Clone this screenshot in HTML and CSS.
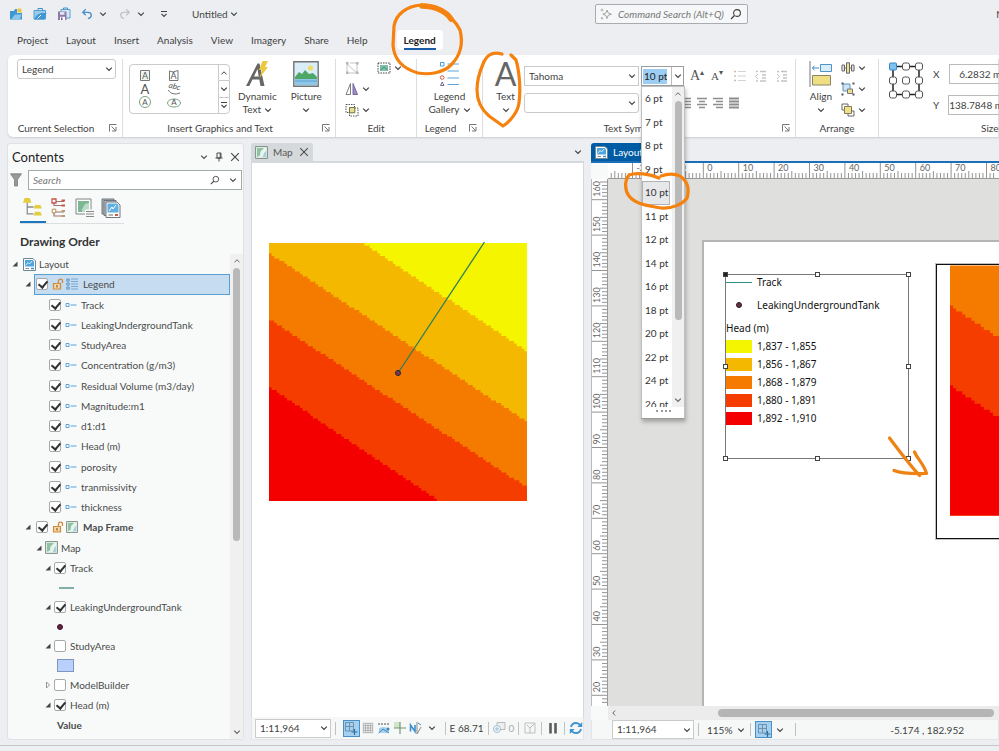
FILE: index.html
```html
<!DOCTYPE html>
<html lang="en">
<head>
  <meta charset="UTF-8" />
  <meta name="viewport" content="width=device-width, initial-scale=1.0" />
  <title>Untitled - Layout</title>
  <link rel="stylesheet" href="styles.css">
</head>
<body>
  <!-- Icon set -->
  <svg class="icon-defs" width="0" height="0" aria-hidden="true">
    <symbol id="i-chev" viewBox="0 0 8 8"><path d="M1.2 2.6 4 5.4 6.8 2.6" fill="none" stroke="currentColor" stroke-width="1.2"/></symbol>
    <symbol id="i-up" viewBox="0 0 8 8"><path d="M1.5 5.2 4 2.8 6.5 5.2" fill="none" stroke="currentColor"/></symbol>
    <symbol id="i-more" viewBox="0 0 8 8"><path d="M1 1.5H7M1.5 3.8 4 6.3 6.5 3.8" fill="none" stroke="currentColor" stroke-width="1.2"/></symbol>
    <symbol id="i-left" viewBox="0 0 8 8"><path d="M5.2 1.5 2.8 4 5.2 6.5" fill="none" stroke="currentColor"/></symbol>
    <symbol id="i-x" viewBox="0 0 10 10"><path d="M1.2 1.2 8.8 8.8M8.8 1.2 1.2 8.8" fill="none" stroke="currentColor" stroke-width="1.2"/></symbol>
    <symbol id="i-launch" viewBox="0 0 8 8"><path d="M.5 7.5V.5H7.500M2.500 2.500 6.500 6.500M7 3V7H3" fill="none" stroke="#666" stroke-width=".9"/></symbol>
    <symbol id="i-find" viewBox="0 0 12 12"><circle cx="7" cy="5" r="3.4" fill="none" stroke="currentColor" stroke-width="1.1"/><path d="M4.500 7.500 1 11" stroke="currentColor" stroke-width="1.300"/></symbol>
    <symbol id="i-spark" viewBox="0 0 12 12"><path d="M7 2 8.200 5 11.500 6.200 8.200 7.400 7 10.500 5.800 7.400 2.800 6.200 5.800 5Z" fill="none" stroke="#999" stroke-width=".9"/><path d="M2 .5V3.500M.5 2H3.500M2 9V11.500M.8 10.200H3.200" stroke="#999" stroke-width=".7"/></symbol>
    <symbol id="i-new" viewBox="0 0 14 14"><path d="M1 4H5L6 2H9V5H13V12.500H1Z" fill="#3f98d3"/><path d="M2.500 12 6 7.500H12.500L11 12Z" fill="#8cc6ea"/><path d="M8 1.200H12.800V6H8Z" fill="#f3e3a3"/><circle cx="10.400" cy="3.600" r="2" fill="#e7c54c"/></symbol>
    <symbol id="i-open" viewBox="0 0 14 14"><path d="M1 3.500H12.500V12H1Z" fill="#9bcbea" stroke="#3b8fcb" stroke-width=".8"/><path d="M5 3.500V1.500H9.500V3.500" fill="none" stroke="#3b8fcb"/><path d="M1 12.500 3.800 8 8 6H13.500L11.500 12.500Z" fill="#3f98d3"/><path d="M4.500 11.500 8 8" stroke="#fff"/></symbol>
    <symbol id="i-save" viewBox="0 0 14 14"><path d="M4 2.500H13V11H4Z" fill="#d6eaf6" stroke="#3b8fcb" stroke-width=".8"/><path d="M6.500 2.500V1H10.500V2.500" fill="none" stroke="#3b8fcb"/><path d="M1 4.500H9.500V13H1Z" fill="#8b7aa8"/><path d="M3 5H7.500V7.800H3Z" fill="#e6e1ee"/><path d="M3 9.800H8V13H3Z" fill="#fff"/><path d="M4 10.500H5.500V13H4Z" fill="#6b5a8c"/></symbol>
    <symbol id="i-undo" viewBox="0 0 14 14"><path d="M5.500 1.500 2 5 5.500 8.500M2.300 5H8.500Q12 5.200 12 8.500 12 11.500 8 12.500" fill="none" stroke="currentColor" stroke-width="1.500"/></symbol>
    <symbol id="i-redo" viewBox="0 0 14 14"><path d="M8.500 1.500 12 5 8.500 8.500M11.700 5H5.500Q2 5.200 2 8.500 2 11.500 6 12.500" fill="none" stroke="currentColor" stroke-width="1.300"/></symbol>
    <symbol id="i-pic" viewBox="0 0 26 26"><path d="M.8.800H25.200V25.200H.8Z" fill="#d9edf9" stroke="#737373" stroke-width="1.400"/><circle cx="17.500" cy="7" r="2.600" fill="#f0dc62"/><path d="M2 16 6 11 9 13 12 9 16 13 20 12 24 16V18H2Z" fill="#4fa767"/><path d="M2 18H24V24H2Z" fill="#8fc7e8"/><path d="M2 20H24" stroke="#5aa3d2"/></symbol>
    <symbol id="i-list" viewBox="0 0 20 26"><g fill="none"><path d="M1.500 1.500H5V5H1.500Z" stroke="#4a9bd6"/><circle cx="3.200" cy="16.500" r="1.800" stroke="#d0574e"/><path d="M3.200 21 5 24.500H1.500Z" stroke="#6d6d8e"/><path d="M8.500 3H20M8.500 10H20M8.500 17H20M8.500 23.500H20" stroke="#5ea6d8" stroke-width="1.200"/></g></symbol>
    <symbol id="i-nodes" viewBox="0 0 14 14"><path d="M2 3V12M2 12H12M2 3 12 12M12 3V12M5 2H12" fill="none" stroke="#c4c4c4"/><path d="M1 1H3.500V3.500H1ZM11 1H13.500V3.500H11ZM1 10.500H3.500V13H1ZM11 10.500H13.500V13H11Z" fill="#b5b5b5"/></symbol>
    <symbol id="i-selall" viewBox="0 0 14 12"><path d="M1 1H13V11H1Z" fill="#fff" stroke="#444" stroke-dasharray="1.500 1"/><path d="M3 3H11V9H3Z" fill="#7fc0a6"/><path d="M3.500 8 7 5 10.500 8" fill="none" stroke="#3f8a8a"/></symbol>
    <symbol id="i-flip" viewBox="0 0 14 14"><path d="M5.500 1.500V12.500H1Z" fill="#fff" stroke="#7d7d7d"/><path d="M8 1.500V12.500H12.500Z" fill="#a08cc9" stroke="#77669e"/></symbol>
    <symbol id="i-group" viewBox="0 0 14 14"><path d="M1 1.500H9.500V9.500H1ZM4.500 5H13V13H4.500Z" fill="none" stroke="#555" stroke-dasharray="1.500 1"/><path d="M4.500 4.500H9.800V9.800H4.500Z" fill="#e7df8b" stroke="#6c7a4a"/></symbol>
    <symbol id="i-bullets" viewBox="0 0 14 14"><path d="M1 2.500H3M1 7H3M1 11.500H3" stroke="#d7b9b9" stroke-width="1.500"/><path d="M5 2.500H13M5 7H13M5 11.500H13" stroke="#d2d2d2" stroke-width="1.200"/></symbol>
    <symbol id="i-outdent" viewBox="0 0 14 14"><path d="M2 2.500H4M6 2.500H12M8 6H12M8 9H12M2 12H4M6 12H12" stroke="#c3c3c3" stroke-width="1.300"/><path d="M4 5 1.500 7.500 4 10" fill="none" stroke="#b5c2cc"/></symbol>
    <symbol id="i-indent" viewBox="0 0 14 14"><path d="M2 2.500H4M6 2.500H12M8 6H12M8 9H12M2 12H4M6 12H12" stroke="#c3c3c3" stroke-width="1.300"/><path d="M2 5 4.500 7.500 2 10" fill="none" stroke="#b5c2cc"/></symbol>
    <symbol id="i-just" viewBox="0 0 12 12"><path d="M1 1.500H11M1 4.500H11M1 7.500H11M1 10.500H11" stroke="#8e8e8e" stroke-width="2"/></symbol>
    <symbol id="i-center" viewBox="0 0 12 12"><path d="M1 1.500H11M3 4.500H9M1 7.500H11M3 10.500H9" stroke="#8e8e8e" stroke-width="1.700"/></symbol>
    <symbol id="i-right" viewBox="0 0 12 12"><path d="M1 1.500H11M4 4.500H11M1 7.500H11M4 10.500H11" stroke="#8e8e8e" stroke-width="1.700"/></symbol>
    <symbol id="i-align" viewBox="0 0 24 26"><path d="M1 0V26" stroke="#777"/><path d="M11.500 3.500H22.500V10.500H11.500Z" fill="#d9ecfa" stroke="#4f93c8"/><path d="M10 7H3.500M5.500 4.800 3.300 7 5.500 9.200" fill="none" stroke="#3f8cc4"/><path d="M3.500 14.500H21.500V24H3.500Z" fill="#f0df82" stroke="#8a8464"/></symbol>
    <symbol id="i-dist" viewBox="0 0 14 12"><path d="M.5 6H13.500" stroke="#666"/><path d="M1 3H3.500V9H1ZM10.500 3H13V9H10.500Z" fill="#e8e8e8" stroke="#666"/><path d="M5.500.8H8.500V11.200H5.500Z" fill="#eedf8a" stroke="#666"/></symbol>
    <symbol id="i-objgrp" viewBox="0 0 14 14"><path d="M2 2H9V9H2Z" fill="#cfe5f6" stroke="#5e94bd"/><path d="M6.500 7H11.500V11.500H6.500Z" fill="#eedf8a" stroke="#777"/><path d="M.5.5H2.500V2.500H.5ZM11.500.5H13.500V2.500H11.500ZM.5 11.500H2.500V13.500H.5ZM11.500 11.500H13.500V13.500H11.500Z" fill="#555"/></symbol>
    <symbol id="i-order" viewBox="0 0 14 14"><path d="M1 1H7V7H1ZM7 8H13V13H7Z" fill="#fff" stroke="#666"/><path d="M3.500 3.500H10.500V10.500H3.500Z" fill="#f0e08a" stroke="#807b5a"/></symbol>
    <symbol id="i-anchor" viewBox="0 0 34 37"><path d="M4 4.500H30V32.500H4Z" fill="none" stroke="#222" stroke-width="1.500"/><g fill="#fff" stroke="#555"><rect x="13.500" y="1" width="7" height="7" rx="2"/><rect x="26.500" y="1" width="7" height="7" rx="2"/><rect x=".5" y="15" width="7" height="7" rx="2"/><rect x="13.500" y="15" width="7" height="7" rx="2"/><rect x="26.500" y="15" width="7" height="7" rx="2"/><rect x=".5" y="29" width="7" height="7" rx="2"/><rect x="13.500" y="29" width="7" height="7" rx="2"/><rect x="26.500" y="29" width="7" height="7" rx="2"/><rect x=".5" y="1" width="7" height="7" rx="1" fill="#7cc3f2" stroke="#3a86bd"/></g></symbol>
    <symbol id="i-pin" viewBox="0 0 8 10"><path d="M2 1H6V6H2ZM.5 6H7.500M4 6V9.500M5.200 1V6" fill="none" stroke="currentColor"/></symbol>
    <symbol id="i-funnel" viewBox="0 0 12 14"><path d="M.5.8H11.500L7.500 6.500V13H4.500V6.500Z" fill="#999" stroke="#777" stroke-width=".8"/></symbol>
    <symbol id="i-order1" viewBox="0 0 19 19"><path d="M4 5V16H10M4 9.500H10" fill="none" stroke="#8b8b8b" stroke-width="1.200"/><path d="M1.500 1H6.500L8 5.500H0ZM11.500 7.500H16.500L18 11H10ZM11.500 14H16.500L18 17.500H10Z" fill="#e2ce3d"/></symbol>
    <symbol id="i-order2" viewBox="0 0 16 20"><path d="M3 4V7.500H13M3 4.500V3.500H13M3 13V18H13M3 14H13" fill="none" stroke="#9b7770" stroke-width="1.200"/><path d="M1 1H5V5H1Z" fill="#fff" stroke="#c9544a" stroke-width="1.300"/><path d="M10.500 2.500H14M10.500 7.500H14" stroke="#c9544a" stroke-width="2"/><path d="M1.200 11.200H4.800V14.800H1.200Z" fill="#fff" stroke="#c08b52"/><path d="M10.500 13H14M10.500 18H14" stroke="#b99b72" stroke-width="2"/></symbol>
    <symbol id="i-order3" viewBox="0 0 20 20"><path d="M1 1H16V16H1Z" fill="#fff" stroke="#7f8487"/><path d="M3 3H14V14H3Z" fill="#7db892"/><path d="M7 11 10 6 14 5V14H7Z" fill="#b8dcc4"/><path d="M10 11.500H20V20H10Z" fill="#f8fafa"/><path d="M11 13.500H19M11 16H19M11 18.500H19" stroke="#888"/></symbol>
    <symbol id="i-order4" viewBox="0 0 20 20"><path d="M1 1H13V16H1Z" fill="#a9b4bb" stroke="#70777c"/><path d="M3 2.500H15V17.500H3Z" fill="#b9c3c9" stroke="#70777c"/><path d="M5 4H16L19 7V19.500H5Z" fill="#fff" stroke="#70777c"/><path d="M6.500 5.500H16L17.500 7V14.500H6.500Z" fill="#62b0e2"/><path d="M8 13 11 9 12 11 15 7" fill="none" stroke="#fff"/><path d="M7.500 17H12" stroke="#666"/><path d="M14 17H17" stroke="#cc5950" stroke-width="2"/></symbol>
    <symbol id="i-layout" viewBox="0 0 13 13"><path d="M.5.5H10L12.500 3V12.500H.5Z" fill="#fff" stroke="#6e8796"/><path d="M2 2H9.500L11 3.500V8.500H2Z" fill="#4ea4dc"/><path d="M2.500 7.500 5 4.500 6.500 6 9 3" fill="none" stroke="#d5ecfa"/><path d="M2.500 10.500H6" stroke="#888"/><path d="M8 10.500H11" stroke="#3f8ec8" stroke-width="1.500"/></symbol>
    <symbol id="i-map" viewBox="0 0 13 13"><path d="M.6.600H12.400V12.400H.6Z" fill="#e8f4ee" stroke="#7f8c86"/><path d="M2 2H9L5.500 5.500 5 9.500 2 11Z" fill="#8fc2a3"/><path d="M9.500 6.500 11.200 5V11.200H7.500Z" fill="#a7d0da"/></symbol>
    <symbol id="i-lock" viewBox="0 0 12 12"><path d="M1.500 5.500H8.500V11H1.500Z" fill="#f4d7a8" stroke="#cf8a3a" stroke-width="1.200"/><path d="M6.500 5.500V3Q6.500 1.200 8.500 1.200 10.500 1.200 10.500 3V5" fill="none" stroke="#cf8a3a" stroke-width="1.300"/><path d="M5 7V9.500" stroke="#8c5a20" stroke-width="1.200"/></symbol>
    <symbol id="i-items" viewBox="0 0 12 12"><path d="M.8 1H3.200V3.200H.8ZM.8 5H3.200V7.200H.8ZM.8 9H3.200V11.200H.8Z" fill="none" stroke="#4d8fc4" stroke-width=".9"/><path d="M5 1H12M5 3.500H12M5 6H12M5 8.500H12M5 11H12" stroke="#6fa4cf" stroke-width=".9"/></symbol>
    <symbol id="i-item" viewBox="0 0 12 6"><path d="M1 1.500H4V4.500H1Z" fill="#fff" stroke="#5aa2da"/><path d="M5.500 3H11.500" stroke="#5aa2da"/></symbol>
    <symbol id="i-open-tri" viewBox="0 0 6 6"><path d="M5.500.5V5.500H.5Z" fill="#444"/></symbol>
    <symbol id="i-shut-tri" viewBox="0 0 6 8"><path d="M1.500 1 4.500 4 1.500 7Z" fill="#fff" stroke="#888" stroke-width=".9"/></symbol>
    <symbol id="i-snap" viewBox="0 0 14 14"><path d="M1.500 1.500H9.500V10H1.500ZM5.500 1.500V10M1.500 5.500H9.500" fill="none" stroke="#6b93b0"/><path d="M10.500 8V14M7.500 11H13.500" stroke="#2c6f9f" stroke-width="1.200"/></symbol>
    <symbol id="i-grid" viewBox="0 0 14 14"><path d="M1.500 1.500H12.500V12.500H1.500ZM4.200 1.500V12.500M7 1.500V12.500M9.800 1.500V12.500M1.500 4.200H12.500M1.500 7H12.500M1.500 9.800H12.500" fill="none" stroke="#a0a0a0" stroke-width=".9"/></symbol>
    <symbol id="i-dyn" viewBox="0 0 14 14"><path d="M1 3H13" stroke="#888" stroke-dasharray="2 1" stroke-width="1.500"/><path d="M2 7 6 6 12 7V12H2Z" fill="#a7d0ec"/><path d="M1.500 12 6 8 12 12" fill="none" stroke="#3d87b9"/><circle cx="11" cy="8" r="1.500" fill="#3d87b9"/></symbol>
    <symbol id="i-cross" viewBox="0 0 14 14"><path d="M1 1H7V7H1Z" fill="#cfe5c9"/><path d="M7 1V13M1 7H13" stroke="#7b9478" stroke-width="1.200"/></symbol>
    <symbol id="i-north" viewBox="0 0 14 14"><path d="M1.500 10.500V4L6 10.500V4" fill="none" stroke="#3c8fca" stroke-width="1.600"/><path d="M8 1V13L12 6" fill="none" stroke="#888"/><path d="M9 2 12 4" stroke="#3c8fca"/></symbol>
    <symbol id="i-selcnt" viewBox="0 0 14 14"><path d="M5 1.500H13V8.500H5Z" fill="#eee" stroke="#b9b9b9"/><circle cx="5" cy="8" r="3.500" fill="#f4f8fb" stroke="#9fbdd2"/><path d="M5 6V10M3 8H7" stroke="#9fbdd2"/></symbol>
    <symbol id="i-env" viewBox="0 0 12 12"><path d="M1 1H11V11H1ZM3 3 6 6 10 2M6 6V11" fill="none" stroke="#bdbdbd"/></symbol>
    <symbol id="i-pause" viewBox="0 0 12 12"><path d="M3.500 1V11.500M8.500 1V11.500" stroke="#5c5c5c" stroke-width="2.600"/></symbol>
    <symbol id="i-sync" viewBox="0 0 14 14"><path d="M2 6Q3 2 7 2 9.500 2 11.500 4.200M12 8Q11 12 7 12 4.500 12 2.500 9.800" fill="none" stroke="#3f93cf" stroke-width="1.900"/><path d="M13.200 1V6H8.200ZM.8 13V8H5.800Z" fill="#3f93cf"/></symbol>
  </svg>

  <header class="titlebar">
    <div class="quick-access">
      <button aria-label="New"><svg class="ico14"><use href="#i-new"/></svg></button>
      <button aria-label="Open"><svg class="ico14"><use href="#i-open"/></svg></button>
      <button aria-label="Save"><svg class="ico14"><use href="#i-save"/></svg></button>
      <button class="split undo" aria-label="Undo"><svg class="ico12"><use href="#i-undo"/></svg><svg class="ico8"><use href="#i-chev"/></svg></button>
      <button class="split redo" aria-label="Redo"><svg class="ico12"><use href="#i-redo"/></svg><svg class="ico8"><use href="#i-chev"/></svg></button>
      <button class="more" aria-label="Customize"><svg class="ico8"><use href="#i-more"/></svg></button>
      <button class="project-name">Untitled <svg class="ico8"><use href="#i-chev"/></svg></button>
    </div>
    <label class="command-search">
      <svg class="ico12"><use href="#i-spark"/></svg>
      <input type="text" placeholder="Command Search (Alt+Q)" aria-label="Command Search" />
      <svg class="ico12"><use href="#i-find"/></svg>
    </label>
    <span class="user">N</span>
  </header>

  <nav class="tabs">
    <a href="#">Project</a>
    <a href="#">Layout</a>
    <a href="#">Insert</a>
    <a href="#">Analysis</a>
    <a href="#">View</a>
    <a href="#">Imagery</a>
    <a href="#">Share</a>
    <a href="#">Help</a>
    <a href="#" class="active"><span>Legend</span></a>
  </nav>

  <section class="ribbon">
    <div class="group">
      <div class="group-body">
        <span class="combo wide">
          <select aria-label="Current Selection"><option>Legend</option></select>
          <svg class="ico8"><use href="#i-chev"/></svg>
        </span>
      </div>
      <div class="group-foot"><span>Current Selection</span><svg class="ico8"><use href="#i-launch"/></svg></div>
    </div>

    <div class="group">
      <div class="group-body graphics">
        <div class="gallery">
          <svg class="gallery-items" viewBox="0 0 88 47">
            <g fill="none" stroke="#777">
              <path d="M10.500 5.500H19.500V15.500H10.500Z" fill="#eef5ef"/>
              <path d="M39.500 6 43 7 48 5.500V15.500H39.500Z"/>
              <circle cx="15" cy="37" r="5.500" stroke="#7aa182"/>
              <ellipse cx="44" cy="38" rx="6.500" ry="4" stroke="#7aa182"/>
              <path d="M38 25Q42 31 50 28" />
            </g>
            <g font-size="9" fill="#555" text-anchor="middle">
              <text x="15" y="14">A</text><text x="43.500" y="14">A</text>
              <text x="15" y="29" font-size="13">A</text><text transform="translate(44 24) rotate(15)" font-size="8" font-style="italic">abc</text>
              <text x="15" y="40" font-size="8">A</text><text x="44" y="40" font-size="8">A</text>
            </g>
          </svg>
          <div class="gallery-nav">
            <button aria-label="Up"><svg class="ico8"><use href="#i-up"/></svg></button>
            <button aria-label="Down"><svg class="ico8"><use href="#i-chev"/></svg></button>
            <button aria-label="More"><svg class="ico8"><use href="#i-more"/></svg></button>
          </div>
        </div>
        <button class="big">
          <svg class="ico26" viewBox="0 0 26 26"><path d="M2 25 13.500 2.500H15.500L20.500 25H16.500L15.300 18.500H8.500L5.300 25ZM10 15.500H14.700L13.500 8Z" fill="#666"/><path d="M18.500 0H24L21 6H24L15.500 17 18 9H15Z" fill="#eac93f"/></svg>
          Dynamic<span>Text <svg class="ico8"><use href="#i-chev"/></svg></span>
        </button>
        <button class="big"><svg class="ico26"><use href="#i-pic"/></svg>Picture<span><svg class="ico8"><use href="#i-chev"/></svg></span></button>
      </div>
      <div class="group-foot"><span>Insert Graphics and Text</span><svg class="ico8"><use href="#i-launch"/></svg></div>
    </div>

    <div class="group">
      <div class="group-body edit">
        <div class="tool-row">
          <button aria-label="Edit vertices"><svg class="ico14"><use href="#i-nodes"/></svg></button>
          <button class="select-all" aria-label="Select all"><svg class="ico14"><use href="#i-selall"/></svg><svg class="ico8"><use href="#i-chev"/></svg></button>
        </div>
        <div class="tool-row"><button aria-label="Flip"><svg class="ico14"><use href="#i-flip"/></svg><svg class="ico8"><use href="#i-chev"/></svg></button></div>
        <div class="tool-row"><button aria-label="Merge"><svg class="ico14"><use href="#i-group"/></svg><svg class="ico8"><use href="#i-chev"/></svg></button></div>
      </div>
      <div class="group-foot"><span>Edit</span></div>
    </div>

    <div class="group">
      <div class="group-body center">
        <button class="big"><svg class="ico26"><use href="#i-list"/></svg>Legend<span>Gallery <svg class="ico8"><use href="#i-chev"/></svg></span></button>
      </div>
      <div class="group-foot"><span>Legend</span><svg class="ico8"><use href="#i-launch"/></svg></div>
    </div>

    <div class="group">
      <div class="group-body text-symbol">
        <button class="big text-btn"><b class="big-a">A</b>Text<span><svg class="ico8"><use href="#i-chev"/></svg></span></button>
        <div class="font-rows">
          <div class="font-row">
            <span class="combo square">
              <select aria-label="Font"><option>Tahoma</option></select>
              <svg class="ico8"><use href="#i-chev"/></svg>
            </span>
            <div class="size-combo">
              <input type="text" value="10 pt" aria-label="Font size" />
              <button aria-label="Open sizes"><svg class="ico8"><use href="#i-chev"/></svg></button>
              <div class="size-popup">
                <div class="size-view">
                  <ul class="size-list">
                    <li>6 pt</li><li>7 pt</li><li>8 pt</li><li>9 pt</li><li class="current">10 pt</li><li>11 pt</li><li>12 pt</li>
                    <li>14 pt</li><li>16 pt</li><li>18 pt</li><li>20 pt</li><li>22 pt</li><li>24 pt</li><li>26 pt</li>
                  </ul>
                  <div class="vscroll"><svg class="ico8"><use href="#i-up"/></svg><i class="thumb"></i><svg class="ico8"><use href="#i-chev"/></svg></div>
                </div>
                <div class="grip"></div>
              </div>
            </div>
            <div class="font-tools">
              <button class="grow" aria-label="Grow font">A<sup>▴</sup></button>
              <button class="shrink" aria-label="Shrink font">A<sup>▾</sup></button>
              <button aria-label="Bullets"><svg class="ico14"><use href="#i-bullets"/></svg></button>
              <button aria-label="Outdent"><svg class="ico14"><use href="#i-outdent"/></svg></button>
              <button aria-label="Indent"><svg class="ico14"><use href="#i-indent"/></svg></button>
            </div>
          </div>
          <div class="font-row">
            <span class="combo">
              <select aria-label="Font style"><option></option></select>
              <svg class="ico8"><use href="#i-chev"/></svg>
            </span>
            <div class="align-tools">
              <button aria-label="Left"><svg class="ico12"><use href="#i-right"/></svg></button>
              <button aria-label="Center"><svg class="ico12"><use href="#i-center"/></svg></button>
              <button aria-label="Right"><svg class="ico12"><use href="#i-right"/></svg></button>
              <button aria-label="Justify"><svg class="ico12"><use href="#i-just"/></svg></button>
            </div>
          </div>
        </div>
      </div>
      <div class="group-foot"><span>Text Symbol</span><svg class="ico8"><use href="#i-launch"/></svg></div>
    </div>

    <div class="group">
      <div class="group-body arrange">
        <button class="big"><svg class="ico26"><use href="#i-align"/></svg>Align<span><svg class="ico8"><use href="#i-chev"/></svg></span></button>
        <div class="tool-col">
          <div class="tool-row"><button aria-label="Distribute"><svg class="ico14"><use href="#i-dist"/></svg><svg class="ico8"><use href="#i-chev"/></svg></button></div>
          <div class="tool-row"><button aria-label="Group"><svg class="ico14"><use href="#i-objgrp"/></svg><svg class="ico8"><use href="#i-chev"/></svg></button></div>
          <div class="tool-row"><button aria-label="Order"><svg class="ico14"><use href="#i-order"/></svg><svg class="ico8"><use href="#i-chev"/></svg></button></div>
        </div>
      </div>
      <div class="group-foot"><span>Arrange</span></div>
    </div>

    <div class="group size">
      <div class="group-body position">
        <svg class="anchor"><use href="#i-anchor"/></svg>
        <div class="coords">
          <label>X <input type="text" value="6.2832 mm" /></label>
          <label>Y <input type="text" value="138.7848 mm" /></label>
        </div>
      </div>
      <div class="group-foot"><span>Size</span></div>
    </div>
  </section>

  <main class="workspace">
    <aside class="contents">
      <div class="pane-head">
        <h2>Contents</h2>
        <button aria-label="Menu"><svg class="ico8"><use href="#i-chev"/></svg></button>
        <button aria-label="Pin"><svg class="ico10"><use href="#i-pin"/></svg></button>
        <button aria-label="Close"><svg class="ico10"><use href="#i-x"/></svg></button>
      </div>
      <div class="filter">
        <svg class="funnel"><use href="#i-funnel"/></svg>
        <label class="search">
          <input type="text" placeholder="Search" aria-label="Search" />
          <svg class="ico10"><use href="#i-find"/></svg>
          <svg class="ico8"><use href="#i-chev"/></svg>
        </label>
      </div>
      <div class="view-tabs">
        <button class="active" aria-label="Drawing order"><svg class="ico20"><use href="#i-order1"/></svg></button>
        <button aria-label="Element type"><svg class="ico20"><use href="#i-order2"/></svg></button>
        <button aria-label="Map series"><svg class="ico20"><use href="#i-order3"/></svg></button>
        <button aria-label="Layouts"><svg class="ico20"><use href="#i-order4"/></svg></button>
      </div>
      <h3>Drawing Order</h3>
      <div class="tree-view">
        <div class="tree">
          <ul class="tree-elements">
            <li class="l0"><svg class="tri"><use href="#i-open-tri"/></svg><svg class="ico13"><use href="#i-layout"/></svg>Layout</li>
            <li class="l1 selected"><svg class="tri"><use href="#i-open-tri"/></svg><label><input type="checkbox" checked /><svg class="ico12"><use href="#i-lock"/></svg><svg class="ico12"><use href="#i-items"/></svg>Legend</label></li>
            <li class="l2"><label><input type="checkbox" checked /><svg class="key"><use href="#i-item"/></svg>Track</label></li>
            <li class="l2"><label><input type="checkbox" checked /><svg class="key"><use href="#i-item"/></svg>LeakingUndergroundTank</label></li>
            <li class="l2"><label><input type="checkbox" checked /><svg class="key"><use href="#i-item"/></svg>StudyArea</label></li>
            <li class="l2"><label><input type="checkbox" checked /><svg class="key"><use href="#i-item"/></svg>Concentration (g/m3)</label></li>
            <li class="l2"><label><input type="checkbox" checked /><svg class="key"><use href="#i-item"/></svg>Residual Volume (m3/day)</label></li>
            <li class="l2"><label><input type="checkbox" checked /><svg class="key"><use href="#i-item"/></svg>Magnitude:m1</label></li>
            <li class="l2"><label><input type="checkbox" checked /><svg class="key"><use href="#i-item"/></svg>d1:d1</label></li>
            <li class="l2"><label><input type="checkbox" checked /><svg class="key"><use href="#i-item"/></svg>Head (m)</label></li>
            <li class="l2"><label><input type="checkbox" checked /><svg class="key"><use href="#i-item"/></svg>porosity</label></li>
            <li class="l2"><label><input type="checkbox" checked /><svg class="key"><use href="#i-item"/></svg>tranmissivity</label></li>
            <li class="l2"><label><input type="checkbox" checked /><svg class="key"><use href="#i-item"/></svg>thickness</label></li>
            <li class="l1 frame"><svg class="tri"><use href="#i-open-tri"/></svg><label><input type="checkbox" checked /><svg class="ico12"><use href="#i-lock"/></svg><svg class="ico12"><use href="#i-map"/></svg>Map Frame</label></li>
            <li class="l3"><svg class="tri"><use href="#i-open-tri"/></svg><svg class="ico13"><use href="#i-map"/></svg>Map</li>
            <li class="l4"><svg class="tri"><use href="#i-open-tri"/></svg><label><input type="checkbox" checked />Track</label></li>
          </ul>
          <ul class="tree-layers">
            <li class="sym"><i class="sym-line"></i></li>
            <li class="l4"><svg class="tri"><use href="#i-open-tri"/></svg><label><input type="checkbox" checked />LeakingUndergroundTank</label></li>
            <li class="sym"><i class="sym-dot"></i></li>
            <li class="l4"><svg class="tri"><use href="#i-open-tri"/></svg><label><input type="checkbox" />StudyArea</label></li>
            <li class="sym"><i class="sym-area"></i></li>
            <li class="l4"><svg class="tri"><use href="#i-shut-tri"/></svg><label><input type="checkbox" />ModelBuilder</label></li>
            <li class="l4"><svg class="tri"><use href="#i-open-tri"/></svg><label><input type="checkbox" checked />Head (m)</label></li>
            <li class="sym value">Value</li>
          </ul>
        </div>
        <div class="vscroll tall"><svg class="ico8"><use href="#i-up"/></svg><i class="thumb"></i><svg class="ico8"><use href="#i-chev"/></svg></div>
      </div>
    </aside>

    <section class="pane map-pane">
      <div class="doc-tabs">
        <button class="doc-tab"><svg class="ico13"><use href="#i-map"/></svg>Map<svg class="ico10"><use href="#i-x"/></svg></button>
        <svg class="ico8"><use href="#i-chev"/></svg>
      </div>
      <div class="map-canvas">
        <svg id="map" class="map" viewBox="0 0 258 258"></svg>
      </div>
      <div class="status">
        <span class="combo scale">
          <select aria-label="Map scale"><option>1:11,964</option></select>
          <svg class="ico8"><use href="#i-chev"/></svg>
        </span>
        <i class="sep"></i>
        <div class="status-tools">
          <button class="on" aria-label="Snapping"><svg class="ico14"><use href="#i-snap"/></svg></button>
          <button aria-label="Grid"><svg class="ico12"><use href="#i-grid"/></svg></button>
          <button aria-label="Constraints"><svg class="ico14"><use href="#i-dyn"/></svg></button>
          <button aria-label="Correction"><svg class="ico14"><use href="#i-cross"/></svg></button>
          <button aria-label="North"><svg class="ico14"><use href="#i-north"/></svg></button>
          <button aria-label="More"><svg class="ico8"><use href="#i-chev"/></svg></button>
        </div>
        <i class="sep"></i>
        <span>E 68.71</span>
        <i class="sep"></i>
        <span class="count"><svg class="ico14"><use href="#i-selcnt"/></svg>0</span>
        <i class="sep"></i>
        <svg class="ico12"><use href="#i-env"/></svg>
        <i class="sep"></i>
        <svg class="ico12"><use href="#i-pause"/></svg>
        <i class="sep"></i>
        <svg class="ico14"><use href="#i-sync"/></svg>
      </div>
    </section>

    <section class="pane layout-pane">
      <div class="doc-tabs">
        <button class="doc-tab"><svg class="ico13"><use href="#i-layout"/></svg>Layout</button>
      </div>
      <div class="layout-view">
        <span class="corner"></span>
        <svg id="ruler-h" class="ruler-h"></svg>
        <svg id="ruler-v" class="ruler-v"></svg>
        <div class="canvas">
          <div class="sheet">
            <div class="legend">
              <div class="legend-row"><i class="patch-line"></i>Track</div>
              <div class="legend-row"><i class="patch-dot"></i>LeakingUndergroundTank</div>
              <div class="legend-title">Head (m)</div>
              <div class="legend-class"><i class="c1"></i>1,837 - 1,855</div>
              <div class="legend-class"><i class="c2"></i>1,856 - 1,867</div>
              <div class="legend-class"><i class="c3"></i>1,868 - 1,879</div>
              <div class="legend-class"><i class="c4"></i>1,880 - 1,891</div>
              <div class="legend-class"><i class="c5"></i>1,892 - 1,910</div>
              <b class="handle nw"></b><b class="handle n"></b><b class="handle ne"></b>
              <b class="handle w"></b><b class="handle e"></b>
              <b class="handle sw"></b><b class="handle s"></b><b class="handle se"></b>
            </div>
            <div class="map-frame"><svg id="frame-map" viewBox="0 0 250 250"></svg></div>
          </div>
        </div>
        <div class="hscroll"><svg class="ico8"><use href="#i-left"/></svg><i class="thumb"></i></div>
      </div>
      <div class="status">
        <span class="combo scale">
          <select aria-label="Layout scale"><option>1:11,964</option></select>
          <svg class="ico8"><use href="#i-chev"/></svg>
        </span>
        <i class="sep"></i>
        <button class="zoom">115% <svg class="ico8"><use href="#i-chev"/></svg></button>
        <i class="sep"></i>
        <div class="status-tools">
          <button class="on" aria-label="Guides"><svg class="ico14"><use href="#i-snap"/></svg></button>
          <button aria-label="More"><svg class="ico8"><use href="#i-chev"/></svg></button>
        </div>
        <i class="sep"></i>
        <span class="coord">-5.174 , 182.952</span>
      </div>
    </section>
  </main>

  <footer class="app-foot"></footer>

  <!-- Hand-drawn marks over the window -->
  <svg class="marks" width="999" height="751" viewBox="0 0 999 751" aria-hidden="true">
    <g fill="none" stroke="#f5820f" stroke-width="3.200" stroke-linecap="round" stroke-linejoin="round">
      <path d="M452 19C444 9 433 5 421 5C407 6 396 14 394 26L393 45C394 60 404 69 418 73C429 75 443 73 451 65C462 54 463 42 460 30C456 22 448 14 438 9"/>
      <path d="M422 6C434 6 446 11 451 19" stroke-width="5.500"/>
      <path d="M502 54C490 51 486 57 483 64C479 73 477 83 477 90C477 103 482 110 489 116L503 126C511 121 518 111 519 103C521 88 519 70 516 60L511 55"/>
      <path d="M659 178C650 174 636 172 629 175C624 181 625 191 629 196C635 204 648 206 661 208C672 209 683 204 687 198C690 188 687 181 680 176C673 173 667 174 661 176"/>
      <path d="M889.500 438C900 452 909 464 919.500 475.500M894 470.500C903 474 913 474 926.500 473.500C924 464 918 460 914.500 452" stroke="#ee8212"/>
    </g>
  </svg>

  <script src="map.js"></script>
</body>
</html>
```

FILE: styles.css
```css
* { box-sizing: border-box; margin: 0; padding: 0; }

body {
  height: 100vh; display: flex; flex-direction: column; overflow: hidden; position: relative;
  background: #eceef1; color: #3f3f3f;
  font-family: Lato, 'Open Sans', sans-serif; font-size: 10px; line-height: 14px;
}
button, input, select { font: inherit; color: inherit; background: none; border: 0; border-radius: 0; outline: 0; }
button { display: inline-flex; align-items: center; }
svg { display: block; flex: none; }
ul { list-style: none; }
a { color: inherit; text-decoration: none; }

.icon-defs { position: absolute; }
.ico8 { width: 8px; height: 8px; }
.ico10 { width: 10px; height: 10px; }
.ico12 { width: 12px; height: 12px; }
.ico13 { width: 13px; height: 13px; }
.ico14 { width: 14px; height: 14px; }
.ico20 { width: 20px; height: 20px; }
.ico26 { width: 26px; height: 26px; }

/* title bar */
.titlebar { height: 28px; flex: none; display: flex; align-items: center; padding-left: 9px; }
.quick-access { display: flex; align-items: center; flex: 0 0 586px; color: #444; }
.quick-access button { margin-right: 10px; }
.quick-access .split { gap: 6px; margin-right: 12px; }
.quick-access .more { margin: 0 24px 0 3px; }
.quick-access .project-name { gap: 2px; }
.undo svg:first-child { color: #4a8fc6; }
.redo svg:first-child { color: #bcbcbc; }
.command-search {
  width: 153px; height: 20px; display: flex; align-items: center; gap: 6px; padding: 0 5px 0 4px;
  border: 1px solid #a9abae; border-radius: 2px; background: #f6f7f8;
}
.command-search input { flex: 1; min-width: 0; font-style: italic; }
input::placeholder { color: #777; opacity: 1; }
.user { margin-left: auto; margin-right: -5px; }

/* ribbon tabs */
.tabs { height: 27px; flex: none; display: flex; gap: 18px; padding: 2px 17px 0; line-height: 20px; }
.tabs .active { background: #fff; border-radius: 4px; margin-left: 11px; height: 20px; padding: 0 7px; font-weight: 700; color: #222; }
.tabs .active span { display: block; height: 20px; border-bottom: 2px solid #1a5da6; }

/* ribbon */
.ribbon {
  height: 82px; flex: none; margin-left: 8px; background: #fff; border-radius: 5px 0 0 5px;
  display: grid; grid-template-columns: 115px 213px 81px 66px 313px 83px 1fr;
  box-shadow: 0 1px 2px #c9ccd0;
}
.group { display: flex; flex-direction: column; border-right: 1px solid #dcdee0; margin: 4px 0 0; min-width: 0; }
.group-body { height: 61px; display: flex; }
.group-body.center { justify-content: center; }
.group-foot { height: 16px; display: flex; align-items: center; line-height: 14px; }
.group-foot span { flex: 1; text-align: center; }
.group-foot svg { margin: 0 5px; }

.combo { display: grid; align-items: center; border: 1px solid #c8cacc; border-radius: 3px; background: #fff; height: 20px; }
.combo select { grid-area: 1 / 1; appearance: none; width: 100%; height: 100%; padding: 0 0 1px 4px; }
.combo svg { grid-area: 1 / 1; justify-self: end; margin-right: 2px; pointer-events: none; }
.combo.wide { width: 99px; margin-left: 9px; }
.combo.square { border-radius: 0; }

.big { flex-direction: column; line-height: 13px; justify-content: flex-start; padding-top: 2px; }
.big > svg { margin-bottom: 3px; }
.big span { display: flex; align-items: center; gap: 3px; min-height: 13px; }

.gallery { display: flex; width: 101px; height: 50px; margin: 5px 8px 0 6px; border: 1px solid #c9cbcd; border-radius: 4px; }
.gallery-items { width: 88px; height: 47px; }
.gallery-nav { flex: 1; display: grid; border-left: 1px solid #c9cbcd; }
.gallery-nav button { justify-content: center; border-bottom: 1px solid #c9cbcd; }
.gallery-nav button:last-child { border: 0; }
.graphics .big + .big { margin-left: 14px; }

.edit { flex-direction: column; gap: 6px; padding: 1px 0 0 9px; }
.tool-row { display: flex; height: 15px; }
.tool-row button { gap: 3px; }
.tool-row .select-all { margin-left: 18px; }

.text-symbol .text-btn { width: 23px; margin: 0 7px 0 11px; }
.big-a { font-size: 32px; line-height: 26px; height: 29px; font-weight: 400; color: #666; }
.font-rows { display: grid; gap: 7px; align-content: start; padding-top: 7px; }
.font-row { display: flex; align-items: center; height: 20px; }
.font-row .combo { width: 115px; margin-right: 2px; }
.size-combo { position: relative; width: 43px; height: 20px; display: flex; align-items: center; border: 1px solid #9b9da0; background: #fff; }
.size-combo input { width: 24px; height: 15px; margin-left: 1px; padding-left: 1px; background: #9ccdf2; color: #222; }
.size-combo button { margin-left: auto; height: 18px; width: 12px; justify-content: center; border-left: 1px solid #b9bbbd; }
.size-popup {
  position: absolute; z-index: 5; top: 19px; left: -1px; width: 44px; height: 333px;
  background: #fff; border: 1px solid #c0c0c0; border-bottom-color: #999; box-shadow: 1px 3px 4px #0004; color: #333;
}
.size-view { display: flex; height: 320px; overflow: hidden; }
.size-list { flex: 1; height: 329px; display: flex; flex-direction: column; }
.size-list li { flex: 1; display: flex; align-items: center; margin-right: 2px; padding: 0 0 1px 2px; border: 1px solid transparent; white-space: nowrap; }
.size-list .current { background: #e6e8ea; border-color: #b0b2b5; }
.vscroll { width: 12px; background: #f0f0f0; display: flex; flex-direction: column; align-items: center; padding: 3px 0; color: #666; }
.vscroll .thumb { width: 7px; height: 219px; margin: 3px 0 auto; border-radius: 4px; background: #b9b9b9; }
.grip { width: 15px; margin: 3px auto 0; border-top: 2px dotted #999; }
.font-tools { display: flex; align-items: center; gap: 7px; margin-left: 6px; }
.font-tools button { width: 14px; }
.font-tools .grow, .font-tools .shrink { font-family: 'Liberation Serif', serif; color: #555; font-size: 14px; }
.font-tools .shrink { font-size: 11px; margin-right: 1px; }
.font-tools sup { font-size: 8px; line-height: 8px; align-self: flex-start; }
.align-tools { display: flex; gap: 4px; margin-left: 39px; }
.align-tools button { height: 12px; }

.arrange { gap: 7px; padding-left: 12px; }
.tool-col { display: flex; flex-direction: column; gap: 6px; padding-top: 1px; }
.position { padding: 3px 0 0 10px; gap: 10px; }
.anchor { width: 34px; height: 37px; }
.coords { display: grid; gap: 11px; align-content: start; padding-top: 2px; }
.coords label { display: flex; align-items: center; gap: 9px; }
.coords input { width: 76px; height: 20px; border: 1px solid #b9bbbd; text-align: right; padding-right: 14px; }
.size .group-foot { padding-left: 102px; }
.size .group-foot span { text-align: left; }

/* workspace */
.workspace { flex: 1; min-height: 0; display: grid; grid-template-columns: 237px 333px 1fr; gap: 7px; padding: 6px 0 5px 7px; }
.contents { display: flex; flex-direction: column; min-height: 0; background: #f8fafa; border: 1px solid #dfe2e5; border-radius: 3px; color: #4a4a4a; }
.pane-head { display: flex; align-items: center; gap: 6px; height: 26px; padding: 0 3px 0 4px; }
.pane-head h2 { flex: 1; font-size: 13px; font-weight: 400; color: #222; }
.filter { display: flex; align-items: center; gap: 6px; padding-left: 2px; }
.funnel { width: 12px; height: 14px; }
.search { flex: 1; display: flex; align-items: center; gap: 9px; height: 20px; padding: 0 4px; border: 1px solid #a6a9ac; background: #fff; margin-right: 1px; }
.search input { flex: 1; min-width: 0; font-style: italic; }
.view-tabs { display: flex; align-self: flex-start; margin: 2px 0 0 12px; border-bottom: 1px solid #dcdfe1; }
.view-tabs button { width: 26px; height: 31px; justify-content: center; }
.view-tabs .active { border-bottom: 2px solid #1b78c0; }
.contents h3 { font-size: 12px; line-height: 16px; margin: 10px 0 4px 12px; color: #333; }
.tree-view { flex: 1; min-height: 0; display: flex; }
.tree { flex: 1; overflow: hidden; white-space: nowrap; }
.tree-elements { height: 324px; display: grid; grid-auto-rows: 1fr; }
.tree li, .tree label { display: flex; align-items: center; }
.tree-layers li { height: 20px; }
.tree .sym { height: 19px; padding-left: 49px; }
.tri { width: 6px; height: 8px; }
.l0 { padding-left: 4px; gap: 3px; }
.l0 .ico13 { margin-left: 2px; }
.l1 { padding-left: 17px; gap: 3px; }
.l1 label { flex: 1; align-self: stretch; gap: 4px; padding-left: 2px; }
.l1 label .ico12 + .ico12 { margin: 0 1px 0 -2px; }
.selected label { background: #c5dcf1; border: 1px solid #5a9fd4; padding-left: 1px; }
.l2 { padding-left: 41px; }
.l2 label { gap: 4px; }
.l3 { padding-left: 28px; gap: 3px; }
.l4 { padding-left: 37px; gap: 3px; }
.l4 label { gap: 4px; }
.frame { font-weight: 700; }
.key { width: 12px; height: 6px; }
.tree input {
  appearance: none; flex: none; width: 12px; height: 12px; border: 1px solid #a6a8aa; border-radius: 2px; background: #fff;
}
.tree input:checked::after {
  content: ''; display: block; width: 4px; height: 7px; margin: 0 0 0 3px;
  border: solid #333; border-width: 0 2px 2px 0; transform: rotate(40deg);
}
.sym-line { width: 15px; height: 2px; margin: 0 2px; background: #7fb0a8; }
.sym-dot { width: 6px; height: 6px; border-radius: 50%; background: #6b2040; border: 1px solid #3a1224; }
.sym-area { width: 17px; height: 13px; background: #b8d0fb; border: 1px solid #8295b8; }
.tree .value { height: 20px; font-weight: 700; }
.vscroll.tall { width: 13px; }
.tall .thumb { height: 273px; }

/* document panes */
.pane { display: flex; flex-direction: column; min-width: 0; min-height: 0; }
.doc-tabs { height: 18px; flex: none; display: flex; align-items: center; justify-content: space-between; padding-right: 2px; }
.doc-tab { height: 18px; padding: 0 4px; gap: 5px; color: #555; background: #d6d9dc; border-radius: 3px 3px 0 0; }
.doc-tab .ico10 { margin-left: 1px; }
.map-canvas { flex: 1; min-height: 0; border: solid #d6d9dc; border-width: 2px 1px 0; background: #fff; padding: 80px 17px 0; }
.map { width: 258px; height: 258px; overflow: visible; }
.layout-pane .doc-tab { background: #005ba5; color: #fff; width: 72px; }
.layout-view {
  flex: 1; min-height: 0; display: grid; grid-template: 16px 1fr 14px / 17px 1fr;
  border-top: 2px solid #1b6fb8; background: #f8fafa;
}
.ruler-h, .ruler-v { width: 100%; height: 100%; min-height: 0; background: #fff; }
.ruler-h { border-bottom: 1px solid #999; }
.ruler-v { border-right: 1px solid #999; border-left: 1px solid #bbb; }
.canvas { position: relative; overflow: hidden; background: #dfdfde; }
.hscroll { grid-column: 2; display: flex; align-items: center; background: #ececec; padding: 0 5px 0 2px; color: #666; }
.hscroll .thumb { flex: 1; height: 8px; margin-left: 100px; border-radius: 4px; background: #b5b5b5; }

/* printed sheet: elements sit at free positions on the canvas */
.sheet { position: absolute; left: 94px; top: 61px; right: -40px; bottom: 0; background: #fff; border: solid #b5b5b5; border-width: 2px 0 0 2px; }
.legend {
  position: absolute; left: 21px; top: 32px; width: 184px; height: 185px; border: 1px solid #777;
  font-family: 'Noto Sans', 'DejaVu Sans', sans-serif; color: #111;
}
.legend-row, .legend-class { display: flex; align-items: center; gap: 5px; }
.legend-row { height: 24px; }
.legend-row:first-child { height: 14px; margin-bottom: 4px; }
.patch-line { width: 26px; height: 1px; background: #2f8f86; }
.legend .patch-dot { width: 6px; height: 6px; margin: 0 10px; border-radius: 50%; background: #6b2b48; border: 1px solid #222; }
.legend-title { height: 20px; line-height: 23px; }
.legend-class { height: 18px; }
.legend-class i { width: 26px; height: 13px; }
.c1 { background: #f5f500; }
.c2 { background: #f5b800; }
.c3 { background: #f57a00; }
.c4 { background: #f53d00; }
.c5 { background: #f50000; }
.handle { position: absolute; width: 5px; height: 5px; border: 1px solid #444; background: #fff; }
.nw, .n, .ne { top: -3px; }
.w, .e { top: 89px; }
.sw, .s, .se { bottom: -3px; }
.nw, .w, .sw { left: -3px; }
.n, .s { left: 89px; }
.ne, .e, .se { right: -3px; }
.nw { background: #222; }
.map-frame { position: absolute; left: 232px; top: 22px; width: 278px; height: 275px; border: 1px solid #111; outline: 1px solid #7777; padding-left: 13px; }
.map-frame svg { width: 250px; height: 251px; }

/* status bars */
.status { height: 23px; flex: none; display: flex; align-items: center; gap: 4px; padding-left: 3px; background: #f6f8f8; border: solid #e2e4e6; border-width: 0 1px 1px; white-space: nowrap; }
.status .scale { width: 82px; height: 19px; border-radius: 0; }
.sep { width: 1px; height: 13px; background: #bfc2c5; }
.status-tools { display: flex; }
.map-pane .status-tools { margin: 0 1px 0 3px; }
.status-tools button { width: 16px; height: 17px; justify-content: center; }
.status-tools .on { width: 17px; background: #a5d0ef; border: 1px solid #4a90c8; }
.count { display: flex; align-items: center; gap: 2px; color: #aaa; }
.map-pane .status > .ico12 { margin: 0 1px; }
.layout-pane .status { height: 20px; padding-left: 20px; }
.zoom { gap: 5px; margin: 0 1px 0 4px; }
.layout-pane .status-tools { margin-right: 3px; }
.coord { margin: 0 34px 0 auto; }
.app-foot { height: 6px; flex: none; border-top: 1px solid #c5c7ca; background: #edeff2; }

.marks { position: absolute; left: 0; top: 0; z-index: 10; pointer-events: none; }
```

FILE: map.js
```js
const NS = "http://www.w3.org/2000/svg";

function add(parent, tag, attrs, text) {
  const el = document.createElementNS(NS, tag);
  for (const key in attrs) el.setAttribute(key, attrs[key]);
  if (text !== undefined) el.textContent = text;
  parent.appendChild(el);
  return el;
}

// Head raster: every class fills everything below its stepped upper edge
function drawRaster(svg, size, cell, base, classes) {
  add(svg, "rect", { width: size, height: size, fill: base });
  classes.forEach(c => {
    let d = `M0 ${size}`;
    for (let x = 0; x < size; x += cell) {
      const edge = c.start + (x + cell / 2) * c.slope;
      const y = Math.min(size, Math.max(0, Math.round(edge / cell) * cell));
      d += `V${y}H${Math.min(size, x + cell)}`;
    }
    add(svg, "path", { d: d + `V${size}Z`, fill: c.color });
  });
}

const map = document.getElementById("map");
drawRaster(map, 258, 2.58, "#f5f500", [
  { start: -62, slope: 0.66, color: "#f5b800" },
  { start: 10, slope: 0.655, color: "#f57a00" },
  { start: 76, slope: 0.653, color: "#f53d00" },
  { start: 144, slope: 0.668, color: "#f50000" }
]);
add(map, "path", { d: "M129 130 215.500 -1", stroke: "#2e7d5b", "stroke-width": 1.3, fill: "none" });
add(map, "circle", { cx: 129, cy: 130, r: 2.5, fill: "#7a3a5c", stroke: "#222" });

drawRaster(document.getElementById("frame-map"), 250, 3.07, "#f57a00", [
  { start: 40, slope: 0.67, color: "#f53d00" },
  { start: 120, slope: 0.67, color: "#f50000" }
]);

const STEP = 3.54;

function rulerH(svg) {
  for (let v = -26; v <= 82; v++) {
    const x = 95.3 + v * STEP;
    const major = v % 10 === 0;
    add(svg, "path", { d: `M${x} 16V${major ? 0 : v % 5 ? 10 : 8}`, stroke: "#888", "stroke-width": 0.9 });
    if (major) add(svg, "text", { x: x + 4, y: 8, "font-size": 9, fill: "#666" }, v);
  }
}

function rulerV(svg) {
  for (let v = 18; v <= 166; v++) {
    const y = 516.3 - (v - 20) * STEP;
    const major = v % 10 === 0;
    add(svg, "path", { d: `M16 ${y}H${major ? 0 : v % 5 ? 10 : 8}`, stroke: "#888", "stroke-width": 0.9 });
    if (major) add(svg, "text", { transform: `translate(8 ${y - 3}) rotate(-90)`, "font-size": 9, fill: "#666" }, v);
  }
}

rulerH(document.getElementById("ruler-h"));
rulerV(document.getElementById("ruler-v"));
```
